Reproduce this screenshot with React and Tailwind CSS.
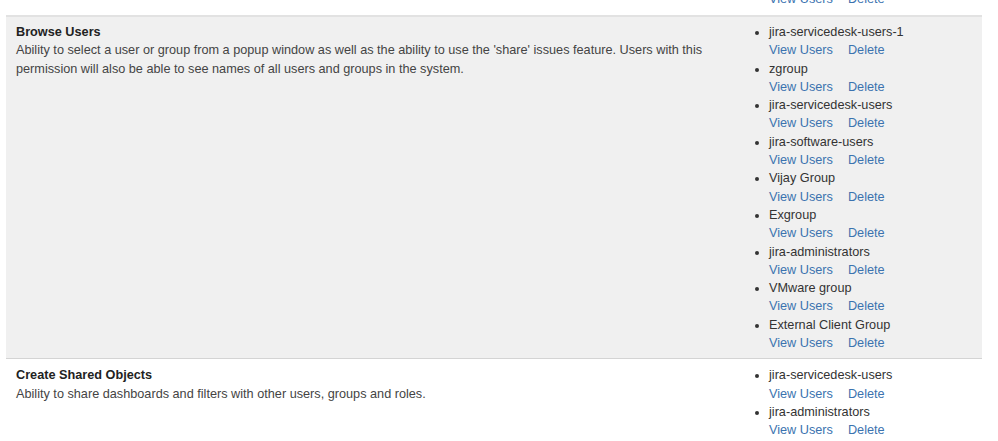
import React from "react";

const rows = [
  {
    title: "Browse Users",
    desc: "Ability to select a user or group from a popup window as well as the ability to use the 'share' issues feature. Users with this permission will also be able to see names of all users and groups in the system.",
    groups: [
      "jira-servicedesk-users-1",
      "zgroup",
      "jira-servicedesk-users",
      "jira-software-users",
      "Vijay Group",
      "Exgroup",
      "jira-administrators",
      "VMware group",
      "External Client Group",
    ],
    shaded: true,
  },
  {
    title: "Create Shared Objects",
    desc: "Ability to share dashboards and filters with other users, groups and roles.",
    groups: ["jira-servicedesk-users", "jira-administrators"],
    shaded: false,
  },
];

function Links() {
  return (
    <div className="flex gap-[15px] text-[#3b73af]">
      <a href="#">View Users</a>
      <a href="#">Delete</a>
    </div>
  );
}

function Row({ row }) {
  return (
    <div
      className={`flex ${row.shaded ? "bg-[#f0f0f0] border-t-2 border-t-[#e2e2e2] border-b border-b-[#d4d4d4]" : "bg-white pt-[1px]"}`}
    >
      <div className="w-[744px] pl-[10px] pr-[20px] pt-[6px] pb-[6px]">
        <div className="font-bold text-[#222]">{row.title}</div>
        <div className="text-[#444]">{row.desc}</div>
      </div>
      <div className="flex-1 pt-[6px] pb-[6px]">
        <ul className="list-disc pl-[19px]">
          {row.groups.map((g, i) => (
            <li key={i} className="text-[#333]">
              <div>{g}</div>
              <Links />
            </li>
          ))}
        </ul>
      </div>
    </div>
  );
}

export default function App() {
  return (
    <div
      className="bg-white w-[998px] h-[441px] overflow-hidden text-[12.7px] leading-[18.3px]"
      style={{ fontFamily: '"Liberation Sans", Arial, sans-serif' }}
    >
      <div className="ml-[6px] w-[976px] mt-[-11px]">
        <div className="flex h-[26px]">
          <div className="w-[744px]"></div>
          <div className="flex-1 pl-[19px] pt-[1px]">
            <Links />
          </div>
        </div>
        {rows.map((r, i) => (
          <Row key={i} row={r} />
        ))}
      </div>
    </div>
  );
}
